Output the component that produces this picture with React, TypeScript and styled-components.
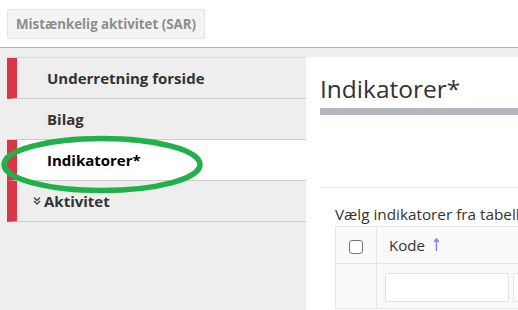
import React from "react";
import styled, { createGlobalStyle } from "styled-components";

const GlobalStyle = createGlobalStyle`
  html, body {
    margin: 0;
    padding: 0;
    background: #eeeeee;
  }
  body {
    font-family: "Open Sans", "Noto Sans", sans-serif;
    color: #333;
  }
`;

const Page = styled.div`
  position: relative;
  width: 518px;
  height: 310px;
  overflow: hidden;
  background: #eeeeee;
`;

const TopBar = styled.header`
  height: 48px;
  box-sizing: border-box;
  padding: 9px 7px;
  background: #fff;
  border-bottom: 1px solid #b3b3b3;
`;

const CaseButton = styled.button`
  height: 30px;
  padding: 0 8px;
  font-family: inherit;
  font-size: 13.3px;
  font-weight: 700;
  color: #8d8d8d;
  background: #f4f4f4;
  border: 1px solid #e4e4e4;
  border-radius: 2px;
`;

const Body = styled.div`
  display: flex;
  padding: 9px 0 0 7px;
  height: 100%;
`;

const Sidebar = styled.nav`
  width: 299px;
  flex-shrink: 0;
  border-top: 1px solid #d8d8d8;
`;

const NavItem = styled.div<{ $marked?: boolean; $active?: boolean }>`
  display: flex;
  align-items: center;
  height: 40px;
  padding-left: ${(p) => (p.$marked ? "30px" : "40px")};
  border-left: ${(p) => (p.$marked ? "10px solid #dc3545" : "none")};
  border-bottom: 1px solid #cccccc;
  background: ${(p) => (p.$active ? "#fff" : "#eeeeee")};
  color: ${(p) => (p.$active ? "#000" : "#333")};
  font-size: 15px;
  font-weight: 700;
`;

const Chevron = styled.span`
  display: inline-flex;
  margin: 0 2px 0 -15px;
  color: #444;
`;

const Main = styled.main`
  flex: 1;
  background: #fff;
  padding: 14px 0 0 14px;
`;

const Heading = styled.h1`
  margin: 0;
  font-size: 24.5px;
  font-weight: 400;
  line-height: 35px;
  color: #333;
`;

const HeadingBar = styled.div`
  height: 7px;
  margin-top: 2px;
  background: #b4b7bb;
`;

const Divider = styled.div`
  height: 1px;
  margin-top: 72px;
  background: #e6e6e6;
`;

const Section = styled.section`
  padding: 16px 0 0 15px;
`;

const Hint = styled.p`
  margin: 0 0 2px;
  font-size: 15.3px;
  line-height: 20px;
  white-space: nowrap;
  color: #333;
`;

const Table = styled.table`
  border-collapse: collapse;
  background: #fafafa;
  font-size: 15px;
  td, th {
    border: 1px solid #e6e6e6;
    padding: 0;
  }
`;

const CheckCell = styled.th`
  width: 40px;
  height: 36px;
  text-align: center;
  vertical-align: middle;
`;

const Checkbox = styled.span`
  display: inline-block;
  width: 12px;
  height: 12px;
  border: 1px solid #777;
  border-radius: 3px;
  background: #fff;
  vertical-align: middle;
`;

const HeadCell = styled.th`
  text-align: left;
  font-weight: 400;
  padding: 0 0 0 12px !important;
  width: 200px;
  color: #333;
`;

const SortArrow = styled.svg`
  margin-left: 8px;
  vertical-align: -1px;
`;

const FilterCell = styled.td`
  padding: 9px 0 6px 8px !important;
  white-space: nowrap;
`;

const FilterInput = styled.input<{ $w: number }>`
  width: ${(p) => p.$w}px;
  height: 29px;
  box-sizing: border-box;
  border: 1px solid #e3e3e3;
  border-radius: 2px;
  background: #fff;
  margin-right: 4px;
  vertical-align: top;
`;

const Annotation = styled.svg`
  position: absolute;
  left: 0;
  top: 0;
  pointer-events: none;
`;

export default function App() {
  return (
    <Page>
      <GlobalStyle />
      <TopBar>
        <CaseButton>Mistænkelig aktivitet (SAR)</CaseButton>
      </TopBar>
      <Body>
        <Sidebar>
          <NavItem $marked>Underretning forside</NavItem>
          <NavItem>Bilag</NavItem>
          <NavItem $marked $active>
            Indikatorer*
          </NavItem>
          <NavItem $marked>
            <Chevron>
              <svg width="10" height="10" viewBox="0 0 10 10" fill="none" stroke="currentColor" strokeWidth="1.3">
                <path d="M2 1.5 L5 4.5 L8 1.5 M2 5 L5 8 L8 5" />
              </svg>
            </Chevron>
            Aktivitet
          </NavItem>
        </Sidebar>
        <Main>
          <Heading>Indikatorer*</Heading>
          <HeadingBar />
          <Divider />
          <Section>
            <Hint>Vælg indikatorer fra tabellen nedenfor</Hint>
            <Table>
              <thead>
                <tr>
                  <CheckCell>
                    <Checkbox />
                  </CheckCell>
                  <HeadCell>
                    Kode
                    <SortArrow width="7" height="14" viewBox="0 0 7 14">
                      <path d="M3.5 1 L3.5 13 M1 4 L3.5 1 L6 4" stroke="#7b80ee" strokeWidth="1.4" fill="none" />
                    </SortArrow>
                  </HeadCell>
                </tr>
              </thead>
              <tbody>
                <tr>
                  <td />
                  <FilterCell>
                    <FilterInput $w={124} />
                    <FilterInput $w={60} />
                  </FilterCell>
                </tr>
              </tbody>
            </Table>
          </Section>
        </Main>
      </Body>
      <Annotation width="518" height="310">
        <ellipse cx="102" cy="164.5" rx="98" ry="26" fill="none" stroke="#22b04b" strokeWidth="5.5" />
      </Annotation>
    </Page>
  );
}
